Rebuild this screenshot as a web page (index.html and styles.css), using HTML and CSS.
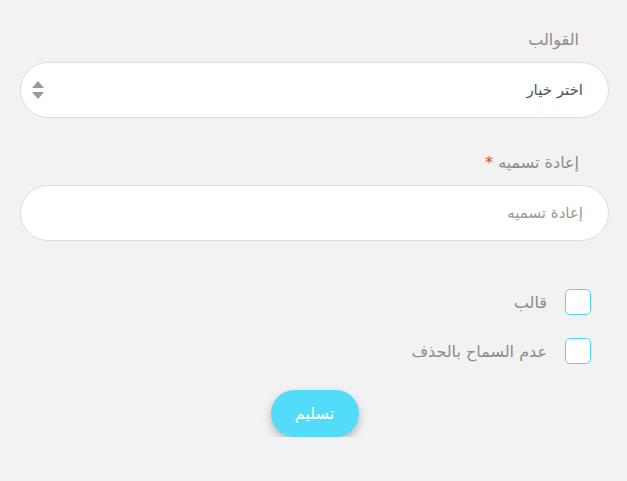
FILE: index.html
```html
<!DOCTYPE html>
<html lang="ar" dir="rtl">
<head>
  <meta charset="UTF-8">
  <title>القوالب</title>
  <link rel="stylesheet" href="styles.css">
</head>
<body>
  <form class="form">
    <div class="field">
      <label class="field-label">القوالب</label>
      <div class="select">
        <span class="select-value">اختر خيار</span>
        <svg class="select-arrows" width="14" height="20" viewBox="0 0 14 20">
          <path d="M7 1 L13 8 H1 Z" fill="#999"/>
          <path d="M7 19 L13 12 H1 Z" fill="#999"/>
        </svg>
      </div>
    </div>

    <div class="field">
      <label class="field-label">إعادة تسميه <span class="req">*</span></label>
      <input class="text-input" type="text" placeholder="إعادة تسميه">
    </div>

    <div class="checks">
      <label class="check"><span class="box"></span>قالب</label>
      <label class="check"><span class="box"></span>عدم السماح بالحذف</label>
    </div>

    <div class="actions">
      <button type="button" class="submit">تسليم</button>
    </div>
  </form>
</body>
</html>
```

FILE: styles.css
```css
* { margin: 0; padding: 0; box-sizing: border-box; }
body {
  font-family: "DejaVu Sans", "Noto Sans", sans-serif;
  background-color: #f2f2f2;
  padding: 20px 18px 0 20px;
}

.form {
  display: flex;
  flex-direction: column;
}

.field { display: flex; flex-direction: column; }
.field + .field { margin-top: 25px; }

.field-label {
  color: #8c8c8c;
  font-size: 16px;
  padding: 10px 30px 0 0;
  height: 42px;
}
.req { color: #e53935; }

.select, .text-input {
  height: 56px;
  background: #fff;
  border: 1px solid #dcdcdc;
  border-radius: 28px;
}

.select {
  display: flex;
  align-items: center;
  justify-content: space-between;
  padding: 0 25px 0 10px;
}
.select-value { color: #555; font-size: 15px; }
.select-arrows { display: block; }

.text-input {
  width: 100%;
  padding: 0 25px;
  font-family: inherit;
  font-size: 15px;
  color: #555;
  outline: none;
}
.text-input::placeholder { color: #999; }

.checks {
  margin-top: 48px;
  display: flex;
  flex-direction: column;
  gap: 23px;
  padding-right: 18px;
}
.check {
  display: flex;
  align-items: center;
  gap: 18px;
  color: #8c8c8c;
  font-size: 16px;
}
.box {
  width: 26px;
  height: 26px;
  border: 1px solid #4dd9f5;
  border-radius: 5px;
  background: #fff;
}

.actions {
  display: flex;
  justify-content: center;
  margin-top: 26px;
}
.submit {
  width: 88px;
  height: 47px;
  border: none;
  border-radius: 24px;
  background: #52dcf9;
  color: #fff;
  font-family: inherit;
  font-size: 16px;
  box-shadow: 0 4px 8px rgba(0, 0, 0, 0.25);
}
```
